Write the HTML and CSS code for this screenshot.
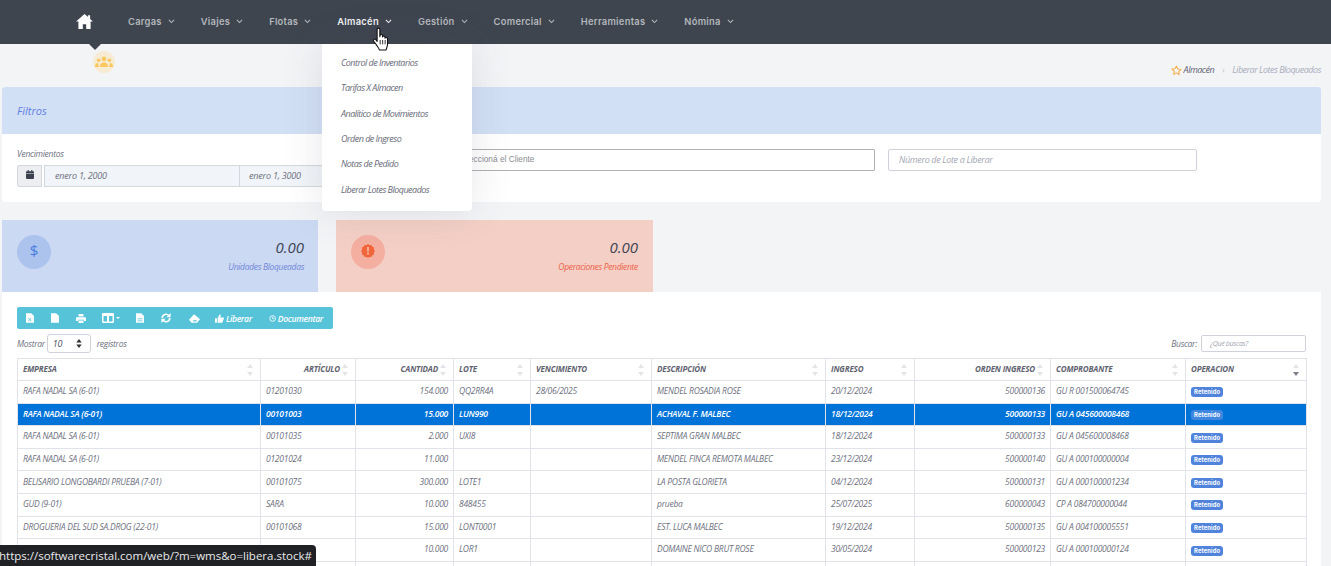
FILE: index.html
```html
<!DOCTYPE html>
<html lang="es">
<head>
<meta charset="utf-8">
<title>Liberar Lotes Bloqueados</title>
<link rel="stylesheet" href="styles.css">
</head>
<body>
<header class="topbar">
  <a class="home" href="#"><svg viewBox="0 0 18 16" width="17" height="15"><path fill="#fff" d="M9 0 0 8h2.500v8h4.700v-5h3.600v5h4.700V8H18l-3-2.700V1.200h-2.200v2.100z"/></svg></a>
  <nav class="menu">
    <a class="menu-item" href="#">Cargas<svg class="chev" viewBox="0 0 8 5"><path d="M1 1l3 3 3-3"/></svg></a>
    <a class="menu-item" href="#">Viajes<svg class="chev" viewBox="0 0 8 5"><path d="M1 1l3 3 3-3"/></svg></a>
    <a class="menu-item" href="#">Flotas<svg class="chev" viewBox="0 0 8 5"><path d="M1 1l3 3 3-3"/></svg></a>
    <a class="menu-item active" href="#">Almacén<svg class="chev" viewBox="0 0 8 5"><path d="M1 1l3 3 3-3"/></svg></a>
    <a class="menu-item" href="#">Gestión<svg class="chev" viewBox="0 0 8 5"><path d="M1 1l3 3 3-3"/></svg></a>
    <a class="menu-item" href="#">Comercial<svg class="chev" viewBox="0 0 8 5"><path d="M1 1l3 3 3-3"/></svg></a>
    <a class="menu-item" href="#">Herramientas<svg class="chev" viewBox="0 0 8 5"><path d="M1 1l3 3 3-3"/></svg></a>
    <a class="menu-item" href="#">Nómina<svg class="chev" viewBox="0 0 8 5"><path d="M1 1l3 3 3-3"/></svg></a>
  </nav>
</header>

<div class="dropdown">
  <a href="#">Control de Inventarios</a>
  <a href="#">Tarifas X Almacen</a>
  <a href="#">Analítico de Movimientos</a>
  <a href="#">Orden de Ingreso</a>
  <a href="#">Notas de Pedido</a>
  <a href="#">Liberar Lotes Bloqueados</a>
</div>
<svg class="cursor" viewBox="0 0 18 24" width="20" height="26"><path fill="#fff" stroke="#111" stroke-width="1" stroke-linejoin="round" d="M4.500 2.200c0-1.600 2.500-1.600 2.500 0V9l.2-1.300c.3-1.200 2.200-1.100 2.300.2v1.300c.2-1.200 2.200-1.100 2.300.2v1c.2-1 2.200-1 2.300.4v5.200c0 2.300-1 3-1.300 5.200H6.600c-.5-2-2-3.200-3.300-5.500L1.200 13c-.7-1.500 1-2.500 2-1.400l1.300 1.700z"/><path stroke="#111" stroke-width=".8" d="M7.300 12v4M9.600 12v4M11.900 12v4"/></svg>

<span class="notch"></span>
<span class="group-badge"><svg viewBox="0 0 20 14" width="18" height="13"><g fill="#f9c85f"><circle cx="10" cy="3" r="2.600"/><circle cx="4" cy="4.500" r="2"/><circle cx="16" cy="4.500" r="2"/><path d="M5.500 12c0-3.600 2-5 4.500-5s4.500 1.400 4.500 5zM0 12c0-3 1.200-4.500 3.400-4.500L4.300 12zM20 12c0-3-1.200-4.500-3.400-4.500L15.700 12z"/></g></svg></span>

<main class="page">
  <div class="crumbs">
    <svg class="star" viewBox="0 0 24 24" width="11" height="11"><path fill="none" stroke="#f6b24d" stroke-width="2.400" stroke-linejoin="round" d="M12 2.500l3 6.300 6.900.9-5 4.800 1.200 6.900L12 17.200l-6.100 3.200 1.200-6.900-5-4.800 6.900-.9z"/></svg>
    <span class="crumb-main">Almacén</span><span class="crumb-sep">›</span><span class="crumb-last">Liberar Lotes Bloqueados</span>
  </div>

  <section class="filters">
    <div class="filters-head">Filtros</div>
    <div class="filters-body">
      <div class="date-field">
        <label class="date-label">Vencimientos</label>
        <div class="date-group">
          <span class="date-icon"><svg viewBox="0 0 10 11" width="8" height="9"><path fill="#3c4250" d="M0 2.500C0 2 .4 1.500 1 1.500h1V0h1.500v1.500h3V0H8v1.500h1c.6 0 1 .5 1 1V4H0zM0 4.700h10V10c0 .6-.4 1-1 1H1c-.6 0-1-.4-1-1z"/></svg></span>
          <span class="date-from">enero 1, 2000</span>
          <span class="date-to">enero 1, 3000</span>
        </div>
      </div>
      <div class="client-input">Seleccioná el Cliente</div>
      <div class="lot-input">Número de Lote a Liberar</div>
    </div>
  </section>

  <div class="stats">
    <div class="stat stat-blue">
      <span class="stat-icon"><span class="dollar">$</span></span>
      <div class="stat-text"><b>0.00</b><small>Unidades Bloqueadas</small></div>
    </div>
    <div class="stat stat-red">
      <span class="stat-icon"><svg class="alert-icon" viewBox="0 0 16 16" width="14" height="14"><path fill="#f2643a" d="M8 0l1.800 1.300 2.200-.2.900 2 2 .9-.2 2.200L16 8l-1.300 1.800.2 2.200-2 .9-.9 2-2.200-.2L8 16l-1.800-1.300-2.200.2-.9-2-2-.9.2-2.200L0 8l1.300-1.800L1.100 4l2-.9.9-2 2.200.2z"/><path fill="#f6c3b2" d="M7 3.500h2l-.3 5.500H7.300zM7 10h2v2H7z"/></svg></span>
      <div class="stat-text"><b>0.00</b><small>Operaciones Pendiente</small></div>
    </div>
  </div>

  <section class="data-card">
    <div class="toolbar">
      <span class="tool"><svg viewBox="0 0 10 12" width="8" height="10"><path fill="#fff" d="M0 0h6.500L10 3.500V12H0z"/><path stroke="#57c3d8" d="M3 6l3.500 4M6.500 6L3 10"/></svg></span>
      <span class="tool"><svg viewBox="0 0 10 12" width="8" height="10"><path fill="#fff" d="M0 0h6.500L10 3.500V12H0z"/></svg></span>
      <span class="tool"><svg viewBox="0 0 12 11" width="10" height="9"><path fill="#fff" d="M3 0h6v3H3zM0 4h12v4.500H9.500V7h-7v1.500H0zM3 8h6v3H3z"/></svg></span>
      <span class="tool tool-cols"><svg viewBox="0 0 12 10" width="12" height="10"><path fill="#fff" fill-rule="evenodd" d="M1 0h10a1 1 0 0 1 1 1v8a1 1 0 0 1-1 1H1a1 1 0 0 1-1-1V1a1 1 0 0 1 1-1zm.5 3v5.500h3.500V3zm5.500 0v5.500h3.500V3z"/></svg><i class="caret"></i></span>
      <span class="tool"><svg viewBox="0 0 10 12" width="8" height="10"><path fill="#fff" d="M0 0h6.500L10 3.500V12H0z"/><path stroke="#57c3d8" d="M2 7h6M2 9.500h6"/></svg></span>
      <span class="tool"><svg viewBox="0 0 12 12" width="10" height="10"><path fill="none" stroke="#fff" stroke-width="2" d="M1.500 6a4.500 4.500 0 0 1 8-2.800M10.500 6a4.500 4.500 0 0 1-8 2.800"/><path fill="#fff" d="M11.500 0v5h-5zM.5 12V7h5z"/></svg></span>
      <span class="tool tool-erase"><svg viewBox="0 0 13 10" width="11" height="9"><path fill="#fff" d="M6 0l5 4 2 2-3.500 4H3L0 6.500z"/><path fill="#57c3d8" d="M5 7h4v1.500H5z"/></svg></span>
      <span class="tool tool-text tool-free"><svg viewBox="0 0 12 11" width="9" height="9"><path fill="#fff" d="M0 5h2.500v6H0zM3.500 5L6 0c1.500 0 2 1 1.500 2.500L7 4h4c1 0 1.200 1 .8 1.500L10 10.500c-.2.300-.5.500-1 .5H3.500z"/></svg>Liberar</span>
      <span class="tool tool-text tool-doc"><svg viewBox="0 0 12 12" width="7" height="7"><circle cx="6.200" cy="6" r="4.800" fill="none" stroke="#fff" stroke-width="1.500"/><path fill="none" stroke="#fff" stroke-width="1.300" d="M6.200 3v3.300h2.500"/></svg>Documentar</span>
    </div>

    <div class="table-controls">
      <div class="length">Mostrar <span class="length-select">10<svg viewBox="0 0 6 10" width="6" height="9"><path fill="#333" d="M3 0l3 4H0zM3 10L0 6h6z"/></svg></span> registros</div>
      <div class="search">Buscar: <span class="search-input">¿Qué buscas?</span></div>
    </div>

    <table class="grid">
      <colgroup>
        <col class="c1"><col class="c2"><col class="c3"><col class="c4"><col class="c5"><col class="c6"><col class="c7"><col class="c8"><col class="c9"><col class="c10">
      </colgroup>
      <thead>
        <tr>
          <th>EMPRESA<i class="sort"></i></th>
          <th class="num">ARTÍCULO<i class="sort"></i></th>
          <th class="num">CANTIDAD<i class="sort"></i></th>
          <th>LOTE<i class="sort"></i></th>
          <th>VENCIMIENTO<i class="sort"></i></th>
          <th>DESCRIPCIÓN<i class="sort"></i></th>
          <th>INGRESO<i class="sort"></i></th>
          <th class="num">ORDEN INGRESO<i class="sort"></i></th>
          <th>COMPROBANTE<i class="sort"></i></th>
          <th>OPERACION<i class="sort sort-down"></i></th>
        </tr>
      </thead>
      <tbody>
        <tr><td>RAFA NADAL SA (6-01)</td><td>01201030</td><td class="num">154.000</td><td>QQ2RR4A</td><td>28/06/2025</td><td>MENDEL ROSADIA ROSE</td><td>20/12/2024</td><td class="num">500000136</td><td>GU R 001500064745</td><td><span class="tag">Retenido</span></td></tr>
        <tr class="selected"><td>RAFA NADAL SA (6-01)</td><td>00101003</td><td class="num">15.000</td><td>LUN990</td><td></td><td>ACHAVAL F. MALBEC</td><td>18/12/2024</td><td class="num">500000133</td><td>GU A 045600008468</td><td><span class="tag">Retenido</span></td></tr>
        <tr><td>RAFA NADAL SA (6-01)</td><td>00101035</td><td class="num">2.000</td><td>UXI8</td><td></td><td>SEPTIMA GRAN MALBEC</td><td>18/12/2024</td><td class="num">500000133</td><td>GU A 045600008468</td><td><span class="tag">Retenido</span></td></tr>
        <tr><td>RAFA NADAL SA (6-01)</td><td>01201024</td><td class="num">11.000</td><td></td><td></td><td>MENDEL FINCA REMOTA MALBEC</td><td>23/12/2024</td><td class="num">500000140</td><td>GU A 000100000004</td><td><span class="tag">Retenido</span></td></tr>
        <tr><td>BELISARIO LONGOBARDI PRUEBA (7-01)</td><td>00101075</td><td class="num">300.000</td><td>LOTE1</td><td></td><td>LA POSTA GLORIETA</td><td>04/12/2024</td><td class="num">500000131</td><td>GU A 000100001234</td><td><span class="tag">Retenido</span></td></tr>
        <tr><td>GUD (9-01)</td><td>SARA</td><td class="num">10.000</td><td>848455</td><td></td><td>prueba</td><td>25/07/2025</td><td class="num">600000043</td><td>CP A 084700000044</td><td><span class="tag">Retenido</span></td></tr>
        <tr><td>DROGUERIA DEL SUD SA.DROG (22-01)</td><td>00101068</td><td class="num">15.000</td><td>LONT0001</td><td></td><td>EST. LUCA MALBEC</td><td>19/12/2024</td><td class="num">500000135</td><td>GU A 004100005551</td><td><span class="tag">Retenido</span></td></tr>
        <tr><td></td><td></td><td class="num">10.000</td><td>LOR1</td><td></td><td>DOMAINE NICO BRUT ROSE</td><td>30/05/2024</td><td class="num">500000123</td><td>GU A 000100000124</td><td><span class="tag">Retenido</span></td></tr>
        <tr><td></td><td></td><td></td><td></td><td></td><td></td><td></td><td></td><td></td><td></td></tr>
      </tbody>
    </table>
  </section>
</main>

<div class="status-url">https://softwarecristal.com/web/?m=wms&amp;o=libera.stock#</div>
</body>
</html>
```

FILE: styles.css
```css
* { box-sizing: border-box; }
html, body { height: 100%; overflow: hidden; }
body {
  margin: 0;
  background: #f3f4f6;
  font-family: "Open Sans", sans-serif;
  font-style: italic;
  color: #6e7180;
}
a { text-decoration: none; color: inherit; }

.topbar {
  height: 44px;
  background: #3e454f;
  display: flex;
  align-items: center;
  padding-left: 76px;
  font-style: normal;
}
.home { display: flex; margin-top: -2px; }
.menu { display: flex; margin-left: 35px; margin-top: -1px; }
.menu-item {
  display: flex;
  align-items: center;
  font: 600 9.300px "Inter", sans-serif;
  letter-spacing: .3px;
  color: #b4b7bc;
  margin-right: 26px;
  white-space: nowrap;
}
.menu-item.active { color: #f0f1f2; }
.chev { width: 7px; height: 4.500px; margin-left: 6px; fill: none; stroke: currentColor; stroke-width: 1.200; }

.dropdown {
  position: absolute;
  left: 322px;
  top: 44px;
  width: 150px;
  height: 167px;
  background: #fff;
  border-radius: 0 0 4px 4px;
  box-shadow: 0 0 40px rgba(80, 80, 100, .14);
  padding: 6px 0 0 19px;
  display: flex;
  flex-direction: column;
  z-index: 5;
}
.dropdown a {
  height: 25.350px;
  line-height: 25px;
  font-size: 9px;
  letter-spacing: -.52px;
  color: #686b78;
  white-space: nowrap;
}
.cursor { position: absolute; left: 372px; top: 27px; z-index: 7; }
.notch {
  position: absolute;
  left: 89px;
  top: 44px;
  border: 6px solid transparent;
  border-top-color: #3e454f;
  border-bottom: 0;
}
.group-badge {
  position: absolute;
  left: 93px;
  top: 51px;
  width: 22px;
  height: 22px;
  border-radius: 50%;
  background: #f7ebd3;
  display: flex;
  align-items: center;
  justify-content: center;
}

.page { padding: 0 10px 0 2px; }
.crumbs {
  height: 43px;
  padding: 20px 0 0;
  display: flex;
  justify-content: flex-end;
  align-items: flex-start;
  font-size: 9px;
  letter-spacing: -.5px;
  line-height: 12px;
  white-space: nowrap;
}
.star { margin: 1px 2px 0 0; }
.crumb-main { color: #5e6373; }
.crumb-sep { color: #c5c8d2; margin: 0 8px; font-style: normal; }
.crumb-last { color: #a9adbd; }

.filters { background: #fff; border-radius: 3px; height: 115px; overflow: hidden; }
.filters-head {
  height: 47px;
  background: #d2e0f6;
  color: #5f7fe0;
  font-size: 11px;
  line-height: 48px;
  padding-left: 15px;
}
.filters-body { display: flex; padding: 15px 0 0 15px; align-items: flex-start; }
.date-field { width: 305px; flex: none; }
.date-label { display: block; font-size: 8.500px; line-height: 10px; height: 16px; color: #6e7180; letter-spacing: -.25px; }
.date-group { display: flex; height: 22px; font-size: 9px; line-height: 20px; letter-spacing: -.2px; color: #6e7180; }
.date-icon {
  flex: none;
  width: 25px;
  margin-right: 2px;
  background: #eceef2;
  border: 1px solid #d4d7de;
  border-radius: 2px 0 0 2px;
  display: flex;
  align-items: center;
  justify-content: center;
  padding-bottom: 3px;
}
.date-from, .date-to {
  flex: none;
  background: #f1f4f8;
  border: 1px solid #d4d7de;
}
.date-from { width: 196px; padding-left: 10px; }
.date-to { width: 90px; padding-left: 9px; border-left: 0; }
.client-input {
  width: 534px;
  height: 22px;
  margin: 0 0 0 19px;
  padding-left: 115px;
  border: 1px solid #aeb0b3;
  background: #fff;
  font: normal 8.300px/19px "Liberation Sans", sans-serif;
  color: #8b8d92;
  border-radius: 1px;
}
.lot-input {
  width: 309px;
  height: 22px;
  margin: 0 0 0 13px;
  padding-left: 10px;
  border: 1px solid #cfd2da;
  border-radius: 2px;
  font-size: 9px;
  line-height: 20px;
  letter-spacing: -.35px;
  color: #a4a7b4;
}

.stats { display: flex; gap: 18px; margin-top: 18px; }
.stat {
  width: 316px;
  height: 72px;
  display: flex;
  justify-content: space-between;
  padding: 15px 14px 0 15px;
}
.stat-red { width: 317px; padding-right: 15px; }
.stat-blue { background: #ccd9f2; }
.stat-red { background: #f3cfc5; }
.stat-icon {
  width: 34px;
  height: 34px;
  border-radius: 50%;
  display: flex;
  align-items: center;
  justify-content: center;
}
.stat-blue .stat-icon { background: #abc3ed; }
.stat-red .stat-icon { background: #f4afa0; }
.dollar { color: #4a7ce0; font: normal 15px/15px "Open Sans", sans-serif; padding-bottom: 3px; }
.alert-icon { margin-bottom: 2px; }
.stat-text { text-align: right; padding-top: 2px; }
.stat-text b { display: block; font-weight: 400; font-size: 15px; line-height: 20px; color: #3f4555; }
.stat-text small { display: block; font-size: 8.500px; line-height: 12px; margin-top: 4px; letter-spacing: -.32px; }
.stat-blue small { color: #6f86da; }
.stat-red small { color: #ef6148; }

.data-card { background: #fff; padding: 15px 15px 0; height: 300px; }
.toolbar {
  width: 316px;
  height: 22px;
  background: #57c3d8;
  border-radius: 2px;
  display: flex;
  align-items: center;
  padding-left: 9px;
  color: #fff;
  font-size: 8.500px;
  font-weight: 600;
}
.tool { display: flex; align-items: center; width: 25px; flex: none; }
.tool-cols { width: 34px; margin-left: 1px; }
.tool-erase { width: 26px; margin-left: 3px; }
.tool-text { width: auto; gap: 2px; white-space: nowrap; letter-spacing: -.3px; }
.tool-free { margin-right: 17px; }
.caret { border: 2.500px solid transparent; border-top-color: #fff; border-bottom: 0; margin-left: 2px; }
.table-controls {
  display: flex;
  justify-content: space-between;
  align-items: center;
  height: 29px;
  font-size: 8.500px;
  letter-spacing: -.3px;
}
.length { display: flex; align-items: center; gap: 5px; }
.length-select {
  width: 44px;
  height: 19px;
  border: 1px solid #cfd2da;
  border-radius: 3px;
  display: flex;
  align-items: center;
  justify-content: space-between;
  padding: 0 8px 0 5px;
  color: #4e5260;
  font-size: 9px;
  margin: 0 1px 0 -3px;
}
.search { display: flex; align-items: center; gap: 4px; }
.search-input {
  width: 105px;
  height: 17px;
  border: 1px solid #cfd2da;
  border-radius: 2px;
  padding-left: 8px;
  font-size: 7px;
  line-height: 15px;
  color: #a4a7b4;
}

.grid {
  width: 1289px;
  table-layout: fixed;
  border-collapse: collapse;
  font-size: 8.500px;
  letter-spacing: -.25px;
  white-space: nowrap;
}
.c1 { width: 243px; } .c2 { width: 95px; } .c3 { width: 98px; } .c4 { width: 77px; } .c5 { width: 121px; }
.c6 { width: 174px; } .c7 { width: 89px; } .c8 { width: 136px; } .c9 { width: 135px; } .c10 { width: 121px; }
.grid th, .grid td { border: 1px solid #e2e3ea; padding: 0 5px 2px; }
.grid th {
  height: 22px;
  text-align: left;
  position: relative;
  font-weight: 700;
  font-size: 8px;
  letter-spacing: -.15px;
  color: #5f6370;
  padding-right: 15px;
}
.grid td { height: 22.600px; border-top: 0; border-bottom: 1px solid #e2e3ea; color: #6e7180; }
.grid .num { text-align: right; }
.grid td.num { padding-right: 5px; }
.sort { position: absolute; right: 7px; top: 5px; width: 6px; height: 12px; }
.sort::before, .sort::after {
  content: "";
  position: absolute;
  left: 0;
  border-left: 3px solid transparent;
  border-right: 3px solid transparent;
}
.sort::before { top: 0; border-bottom: 4px solid #e4e5ea; }
.sort::after { bottom: 0; border-top: 4px solid #e4e5ea; }
.sort-down::after { border-top-color: #7c808c; }
.tag {
  display: inline-block;
  background: #4f83dc;
  color: #fff;
  font: normal 700 5.800px/10px "Inter", sans-serif;
  letter-spacing: .15px;
  padding: 0 3px;
  margin-top: 3px;
  border-radius: 3px;
  vertical-align: middle;
}
.selected td { background: #0073d9; color: #fff; font-weight: 600; }
.selected .tag { background: #3f87e0; }

.status-url {
  position: fixed;
  left: 0;
  bottom: 0;
  width: 316px;
  height: 21px;
  background: #202124;
  border-top-right-radius: 4px;
  color: #e8eaed;
  font: normal 11.500px/22px "Open Sans", sans-serif;
  white-space: nowrap;
  overflow: hidden;
  text-indent: -1px;
  z-index: 9;
}
```
